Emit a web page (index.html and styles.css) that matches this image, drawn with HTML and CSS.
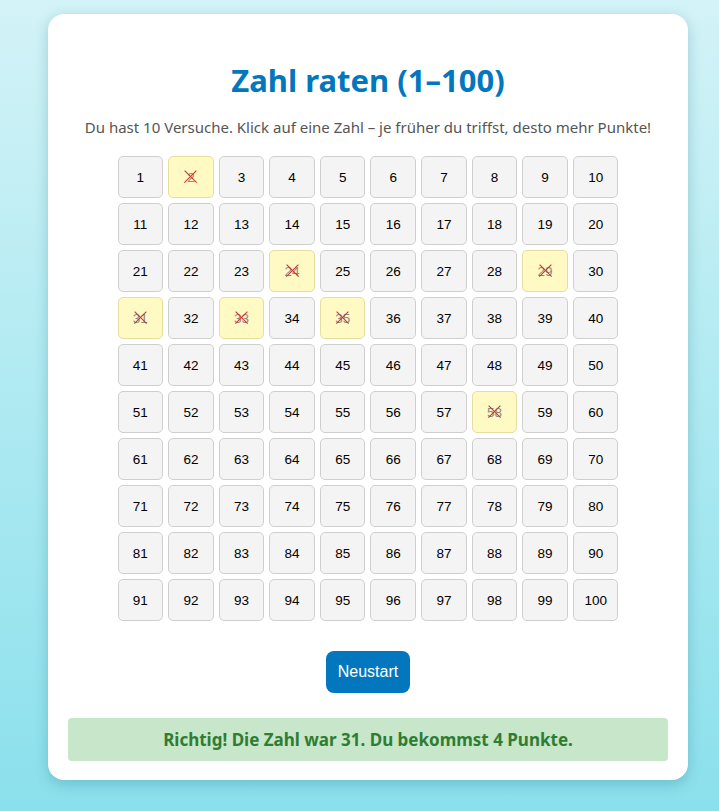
FILE: index.html
```html
<!DOCTYPE html>
<html lang="de">
<head>
<meta charset="utf-8">
<title>Zahl raten</title>
<link rel="stylesheet" href="styles.css">
</head>
<body>
<div class="card">
  <h1 class="title">Zahl raten (1–100)</h1>
  <p class="intro">Du hast 10 Versuche. Klick auf eine Zahl – je früher du triffst, desto mehr Punkte!</p>
  <div class="grid" id="grid"></div>
  <div class="actions"><button class="restart">Neustart</button></div>
  <div class="status">Richtig! Die Zahl war 31. Du bekommst 4 Punkte.</div>
</div>
<script>
  var wrong = [2, 24, 29, 31, 33, 35, 58];
  var g = document.getElementById('grid');
  for (var i = 1; i <= 100; i++) {
    var b = document.createElement('button');
    b.className = 'cell' + (wrong.indexOf(i) >= 0 ? ' wrong' : '');
    var s = document.createElement('span');
    s.className = 'num';
    s.textContent = i;
    b.appendChild(s);
    g.appendChild(b);
  }
</script>
</body>
</html>
```
FILE: styles.css
```css
html, body {
  margin: 0;
  padding: 0;
}
body {
  min-height: 811px;
  background: linear-gradient(180deg, #d3f3f7 0%, #8ae0ec 100%);
  font-family: "Noto Sans", "Open Sans", sans-serif;
  padding-top: 14px;
  box-sizing: border-box;
}
.card {
  width: 640px;
  margin-left: 48px;
  background: #fff;
  border-radius: 16px;
  box-shadow: 0 4px 14px rgba(0, 90, 110, 0.25);
  padding: 45px 20px 19px;
  box-sizing: border-box;
}
.title {
  margin: 0;
  text-align: center;
  color: #0277bd;
  font-size: 31px;
  font-weight: 700;
  line-height: 42px;
}
.intro {
  margin: 16px 0 0;
  text-align: center;
  color: #555;
  font-size: 15px;
  line-height: 20px;
}
.grid {
  margin: 19px auto 0;
  width: 501px;
  display: grid;
  grid-template-columns: repeat(10, 1fr);
  column-gap: 5px;
  row-gap: 5px;
}
.cell {
  height: 42px;
  padding: 0;
  background: #f4f4f4;
  border: 1px solid #cfcfcf;
  border-radius: 5px;
  font-family: "Liberation Sans", Arial, sans-serif;
  font-size: 13.5px;
  color: #000;
  display: flex;
  align-items: center;
  justify-content: center;
}
.cell.wrong {
  background: #fff9c4;
  border-color: #e6dda0;
}
.num {
  position: relative;
}
.wrong .num {
  color: #8a8a8a;
}
.wrong .num::before,
.wrong .num::after {
  content: "";
  position: absolute;
  left: 50%;
  top: 50%;
  width: 17px;
  height: 1.4px;
  background: #d32f2f;
  margin-left: -8.5px;
  margin-top: -0.7px;
}
.wrong .num::before {
  transform: rotate(45deg);
}
.wrong .num::after {
  transform: rotate(-45deg);
}
.actions {
  display: flex;
  justify-content: center;
  margin-top: 30px;
}
.restart {
  width: 84px;
  height: 42px;
  background: #0277bd;
  color: #fff;
  border: none;
  border-radius: 8px;
  font-family: "Liberation Sans", Arial, sans-serif;
  font-size: 16px;
  padding: 0;
}
.status {
  margin-top: 25px;
  background: #c8e6c9;
  color: #2e7d32;
  border-radius: 4px;
  height: 43px;
  display: flex;
  align-items: center;
  justify-content: center;
  font-size: 17px;
  font-weight: 700;
}
```
